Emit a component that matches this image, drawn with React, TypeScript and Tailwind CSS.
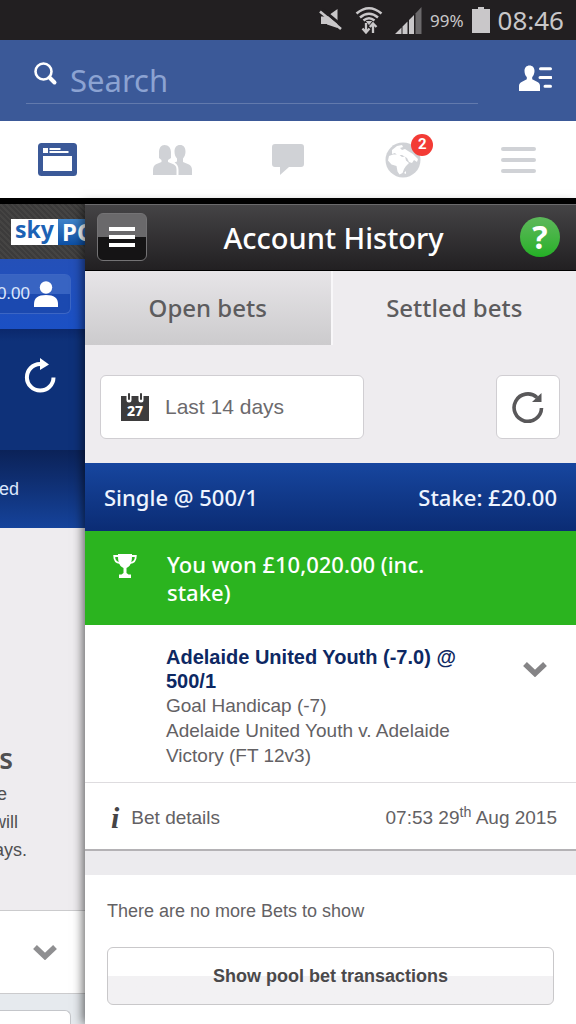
import React from "react";

const brand = "font-['Noto_Sans','Open_Sans',sans-serif]";

function MutedIcon() {
  return (
    <svg viewBox="0 0 24 24" className="h-6 w-6" aria-hidden="true">
      <path d="M2 8.500h6L18.500 1v19L8 16.500v-.5H2z" fill="#c9c7c9" />
      <path d="M3.500 1.500l21 17.500" stroke="#221f21" strokeWidth="3" />
      <path d="M1 3.500l21 17.500" stroke="#c9c7c9" strokeWidth="2.600" />
    </svg>
  );
}

function WifiIcon() {
  return (
    <svg viewBox="0 0 28 28" className="h-7 w-7" fill="none" stroke="#c9c7c9" aria-hidden="true">
      <path d="M1.500 7.500Q14-3 26.500 7.500M5 11.500Q14 4 23 11.500M8.500 14.500Q14 10 19.500 14.500" strokeWidth="2.500" />
      <path d="M11.500 15.500h5L14 18.500z" fill="#c9c7c9" />
      <path d="M11 17v9M7.500 22.500l3.500 4 3.500-4M18 27v-9M14.800 21l3.200-3.500 3.500 3.500" strokeWidth="2.300" />
    </svg>
  );
}

function SignalIcon() {
  return (
    <svg viewBox="0 0 27 27" className="h-[27px] w-[27px]" fill="#c9c7c9" aria-hidden="true">
      <path d="M0 27l6.500-6.500V27zM7.500 19.500l5-5V27h-5zM14 13l5-5v19h-5z" />
      <path d="M20.500 6.500L26.500 0v27h-6z" fill="#6b696b" />
    </svg>
  );
}

function BatteryIcon() {
  return (
    <svg viewBox="0 0 18 26" className="h-[26px] w-[18px]" fill="#c9c7c9" aria-hidden="true">
      <path d="M6 0h6v2h6v24H0V2h6z" />
    </svg>
  );
}

function StatusBar() {
  return (
    <div className="flex h-10 items-center justify-end bg-[#221f21] pr-3 font-['Noto_Sans',sans-serif] leading-none text-[#c9c7c9]">
      <MutedIcon />
      <span className="ml-3 flex"><WifiIcon /></span>
      <span className="ml-3 flex"><SignalIcon /></span>
      <span className="ml-2 text-[17px]">99%</span>
      <span className="mx-2 flex"><BatteryIcon /></span>
      <span className="text-[26px]">08:46</span>
    </div>
  );
}

function SearchBar() {
  return (
    <div className="flex h-[81px] items-start justify-between bg-[#3b5998] pl-[26px] pr-6">
      <div className="mr-10 flex h-16 flex-1 items-center border-b border-[#627aad] pl-2 pt-4">
        <svg viewBox="0 0 24 24" className="mb-3 h-6 w-6 shrink-0" fill="none" stroke="white" aria-hidden="true">
          <circle cx="9.500" cy="9.500" r="8" strokeWidth="2.600" />
          <path d="M15.500 15.500l5 5" strokeWidth="4" strokeLinecap="round" />
        </svg>
        <input
          type="search"
          aria-label="Search"
          placeholder="Search"
          className="ml-3 w-full bg-transparent font-['Noto_Sans',sans-serif] text-[31px] leading-9 text-white outline-none placeholder:text-[#8ca3d2]"
        />
      </div>
      <button type="button" aria-label="Friend requests" className="mt-6">
        <svg viewBox="0 0 34 28" className="h-7 w-[34px]" fill="white" aria-hidden="true">
          <path d="M11.500 1.500c3 0 5 2.200 5 5.500 0 2.600-1 4.700-2.300 6v2.300l5.300 2.600c1.800 1 2.500 2.100 2.500 4.200V27H1v-4.900c0-2.100.8-3.200 2.600-4.200l5.200-2.600V13C7.400 11.700 6.500 9.600 6.500 7c0-3.300 2-5.500 5-5.500z" />
          <path d="M22.500 4.700h10M22 13.500h11M27 22.300h5.500" stroke="white" strokeWidth="3" strokeLinecap="round" />
        </svg>
      </button>
    </div>
  );
}

function NavTabs() {
  return (
    <nav className="grid h-[77px] grid-cols-5 place-items-center bg-white text-[#d0d2d6]">
      <button type="button" aria-label="News feed">
        <svg viewBox="0 0 39 33" className="h-[33px] w-[39px]" aria-hidden="true">
          <rect width="39" height="33" rx="3.500" fill="#3b5998" />
          <path d="M5 5h5v5H5zM11.500 5h11v2h-11zM11.500 8h19v2h-19zM5 13h29v15H5z" fill="white" />
        </svg>
      </button>
      <button type="button" aria-label="Friends">
        <svg viewBox="0 0 39 30" className="h-[30px] w-[39px]" fill="currentColor" aria-hidden="true">
          <path d="M11.500 0C15.600 0 18 3 18 7.500v5.500l-3 2v2l5.500 2.200c2 1 3 2.800 3 5.300V30H0v-4.500c0-3 1-5.200 3-6.200L8.500 17v-2L6 13V7.500C6 3 8 0 11.500 0z" />
          <path d="M27 0c3.600 0 5.500 2.500 5.500 6.500 0 3-.9 5.300-2.500 7V17l6 2.500c2 1 3 3 3 5.500v5H25.500v-5c0-3.600-1.400-6-4-7.400l2.500-1v-3c-1.700-1.700-2.500-4-2.500-7C21.500 2.500 23.500 0 27 0z" />
        </svg>
      </button>
      <button type="button" aria-label="Messages">
        <svg viewBox="0 0 32 31" className="h-[31px] w-8" fill="currentColor" aria-hidden="true">
          <path d="M3 0h26q3 0 3 3v17q0 3-3 3H17l-9 8v-8H3q-3 0-3-3V3q0-3 3-3z" />
        </svg>
      </button>
      <button type="button" aria-label="Notifications" className="relative">
        <svg viewBox="0 0 36 36" className="h-9 w-9" aria-hidden="true">
          <circle cx="18" cy="18" r="17.500" fill="currentColor" />
          <path d="M4 14l4-1.500 6 0 3 2.500 3-.5 1 4 3 2.500-3 3-2 3-1.500 4-3 1.500-2-3-1-5.500-5-1.500-3.500-4z" fill="white" />
          <path d="M7 8l5-4 5-1 1 2-3 1 2 2 3-1 3 2 5 3 5 5-1 3-3-2-2 3-3-1-2-4-5-3-5 0-2-2-3 1z" fill="white" />
          <path d="M19 31l2-2 0 3z" fill="white" />
        </svg>
        <span className="absolute -right-3 -top-2 flex h-[22px] w-[22px] items-center justify-center rounded-full bg-[#f33b35] font-['Roboto',sans-serif] text-[15px] font-bold leading-none text-white">
          2
        </span>
      </button>
      <button type="button" aria-label="Menu" className="flex flex-col gap-[7px]">
        <span className="h-1 w-[35px] rounded-full bg-[#d0d2d6]" />
        <span className="h-1 w-[35px] rounded-full bg-[#d0d2d6]" />
        <span className="h-1 w-[35px] rounded-full bg-[#d0d2d6]" />
      </button>
    </nav>
  );
}

function Chevron({ className }: { className: string }) {
  return (
    <svg viewBox="0 0 24 16" className={className} fill="none" aria-hidden="true">
      <path d="M2 3l10 9.500L22 3" stroke="currentColor" strokeWidth="5.500" />
    </svg>
  );
}

function Sidebar() {
  return (
    <aside className="flex w-[85px] shrink-0 flex-col overflow-hidden bg-[#eeecef] font-['Liberation_Sans',Arial,sans-serif] text-[#505052]">
      <div className="flex h-[55px] items-center bg-[repeating-linear-gradient(45deg,#3c3b3b_0_2px,#454443_2px_4px)] pl-[11px]">
        <span className={`${brand} flex h-[26px] w-[47px] shrink-0 items-center justify-center bg-white pb-1 text-[23px] font-bold leading-none text-[#1c62b5]`}>
          sky
        </span>
        <span className={`${brand} flex h-[26px] w-16 shrink-0 items-center bg-linear-to-b from-[#3f83c9] to-[#0b4fa4] pl-1 text-[24px] font-bold leading-none text-white`}>
          PO
        </span>
      </div>
      <div className="flex h-[70px] items-center bg-linear-to-b from-[#2450b8] to-[#1b50c4]">
        <button type="button" className="flex h-10 w-[71px] items-center justify-end gap-1 rounded-r-md border border-l-0 border-[#3c66c4] bg-linear-to-b from-[#3864c2] from-50% to-[#1b49b0] to-50% pr-3 text-[17px] text-[#dbe6fb]">
          <span>0.00</span>
          <svg viewBox="0 0 24 26" className="h-[26px] w-6 shrink-0" fill="white" aria-hidden="true">
            <circle cx="12" cy="6.500" r="6.200" />
            <path d="M0 26v-3c0-6 4-9 12-9s12 3 12 9v3z" />
          </svg>
        </button>
      </div>
      <div className="flex h-[121px] justify-end bg-linear-to-b from-[#0b286c] via-[#0e3179] via-10% to-[#0e3179] pr-7 pt-7">
        <button type="button" aria-label="Refresh" className="h-9">
          <svg viewBox="0 0 34 36" className="h-9 w-[34px]" fill="none" aria-hidden="true">
            <path d="M30.500 20.500A13.300 13.300 0 1 1 17 7" stroke="white" strokeWidth="4" />
            <path d="M17 1l9 6.500-9 5.500z" fill="white" />
          </svg>
        </button>
      </div>
      <div className="flex h-[78px] items-center justify-end bg-linear-to-b from-[#0b2258] to-[#15439b] pr-[66px] text-lg text-[#dbe6fb]">
        ed
      </div>
      <div className="flex h-[382px] flex-col items-start pt-52">
        <span className={`${brand} flex w-[13px] justify-end text-[28px] font-semibold leading-[44px]`}>s</span>
        <span className="flex w-[7px] justify-end text-lg leading-7">e</span>
        <span className="flex w-[18px] justify-end text-lg leading-7">will</span>
        <span className="flex w-[27px] justify-end text-lg leading-7">ays.</span>
      </div>
      <div className="flex h-[84px] items-center justify-end border-y border-[#cbcbcd] bg-white pr-7 text-[#8f8f91]">
        <Chevron className="h-4 w-6" />
      </div>
      <div className="flex-1 bg-[#e6eaee] pt-4">
        <div className="h-full w-[71px] rounded-tr-md border-r border-t border-[#c4c6ca] bg-white" />
      </div>
    </aside>
  );
}

function PanelHeader() {
  return (
    <header className="flex h-[67px] items-center justify-between border-b border-black bg-linear-to-b from-[#454446] to-[#222022] pl-3 pr-4 shadow-[inset_0_1px_0_#6b6a6c]">
      <button type="button" aria-label="Open menu" className="flex h-12 w-[50px] flex-col items-center justify-center gap-1 rounded-md border border-[#747375] bg-linear-to-b from-[#6a696b] from-50% to-[#151415] to-50%">
        <span className="h-1 w-[26px] bg-white" />
        <span className="h-1 w-[26px] bg-white" />
        <span className="h-1 w-[26px] bg-white" />
      </button>
      <h1 className={`${brand} text-[29px] font-medium leading-none text-white`}>Account History</h1>
      <button type="button" aria-label="Help" className={`${brand} flex h-10 w-10 items-center justify-center rounded-full bg-linear-to-b from-[#5cb85a] to-[#22b024] text-[32px] font-bold leading-none text-white`}>
        ?
      </button>
    </header>
  );
}

function FilterBar() {
  return (
    <div className="flex items-center justify-between bg-[#eeecef] pb-6 pl-[15px] pr-4 pt-[30px]">
      <label className="flex h-16 w-[264px] items-center rounded-md border border-[#d0ced2] bg-white pl-5">
        <svg viewBox="0 0 28 28" className="h-7 w-7" aria-hidden="true">
          <path d="M0 3h28v25H0z" fill="#3d3c3d" />
          <path d="M8 3v4M20 3v4" stroke="white" strokeWidth="5" strokeLinecap="round" />
          <path d="M8 1v5M20 1v5" stroke="#3d3c3d" strokeWidth="2" strokeLinecap="round" />
          <text x="14" y="23" textAnchor="middle" fontFamily="Noto Sans, sans-serif" fontSize="14" fontWeight="800" fill="white">27</text>
        </svg>
        <select aria-label="Period" className="ml-4 flex-1 appearance-none bg-transparent font-['Liberation_Sans',Arial,sans-serif] text-[21px] text-[#6c6a6d] outline-none">
          <option>Last 14 days</option>
        </select>
      </label>
      <button type="button" aria-label="Refresh bets" className="flex h-16 w-16 items-center justify-center rounded-md border border-[#d0ced2] bg-white">
        <svg viewBox="0 0 32 32" className="h-8 w-8" fill="none" aria-hidden="true">
          <path d="M29.500 17A13.700 13.700 0 1 1 25 6.500" stroke="#59585a" strokeWidth="3.600" />
          <path d="M29.500 2v9H20z" fill="#59585a" />
        </svg>
      </button>
    </div>
  );
}

function BetCard() {
  return (
    <section>
      <div className={`${brand} flex h-[68px] items-center justify-between bg-linear-to-b from-[#17469f] to-[#0b2c74] px-[19px] text-[22px] font-medium text-[#eef4ff]`}>
        <span>Single @ 500/1</span>
        <span>Stake: £20.00</span>
      </div>
      <div className="flex bg-[#2bb41f] pb-[19px] pl-7 pr-4 pt-[19px] text-white">
        <svg viewBox="0 0 24 24" className="mt-1 h-6 w-6 shrink-0" aria-hidden="true">
          <path d="M5 0h14v2c0 7-2 10.500-5.500 12v5l2 1.500H18V24H6v-3.500h2.500l2-1.500v-5C7 12.500 5 9 5 2z" fill="white" />
          <path d="M5.500 2H1.200c0 5 2 6.800 6 7.200M18.500 2h4.300c0 5-2 6.800-6 7.200" fill="none" stroke="white" strokeWidth="1.800" />
        </svg>
        <p className={`${brand} ml-[30px] w-72 text-[22px] font-medium leading-7`}>
          You won £10,020.00 (inc. stake)
        </p>
      </div>
      <div className="flex items-start justify-between bg-white pb-[14px] pl-[81px] pr-[29px] pt-5">
        <div className="w-[300px] text-[19px] text-[#636164]">
          <h2 className="text-[20px] font-bold leading-6 text-[#0d2863]">Adelaide United Youth (-7.0) @ 500/1</h2>
          <p className="leading-[25px]">Goal Handicap (-7)</p>
          <p className="leading-[25px]">Adelaide United Youth v. Adelaide Victory (FT 12v3)</p>
        </div>
        <button type="button" aria-label="Expand bet" className="mt-4 text-[#858486]">
          <Chevron className="h-4 w-6" />
        </button>
      </div>
      <div className="flex h-[69px] items-center justify-between border-b-2 border-t border-b-[#b4b2b5] border-t-[#dedcdf] bg-white pl-[26px] pr-[19px] pt-1 text-[19px] text-[#636164]">
        <button type="button" className="flex items-center gap-3">
          <span className="font-['Liberation_Serif',serif] text-[30px] font-bold italic leading-none text-[#454446]" aria-hidden="true">i</span>
          Bet details
        </button>
        <time dateTime="2015-08-29T07:53">07:53 29<sup>th</sup> Aug 2015</time>
      </div>
    </section>
  );
}

export default function App() {
  return (
    <div className="flex min-h-screen flex-col overflow-hidden bg-white">
      <StatusBar />
      <SearchBar />
      <NavTabs />
      <div className="flex flex-1 border-t-[6px] border-black">
        <Sidebar />
        <main className="relative z-10 flex min-w-0 flex-1 flex-col bg-white font-['Liberation_Sans',Arial,sans-serif] shadow-[-2px_0_10px_rgba(0,0,0,0.6)]">
          <PanelHeader />
          <div className={`${brand} grid h-[74px] grid-cols-2 bg-[#eeecef] text-[24px] font-medium text-[#5d5c5e]`}>
            <button type="button" className="bg-linear-to-b from-[#e7e5e8] to-[#cccbcd]">Open bets</button>
            <button type="button" className="border-l-2 border-white/60">Settled bets</button>
          </div>
          <FilterBar />
          <BetCard />
          <div className="h-6 bg-[#ecebee]" />
          <div className="flex flex-col gap-6 bg-white px-[22px] pb-4 pt-6 text-[18px] text-[#636164]">
            <p className="leading-6">There are no more Bets to show</p>
            <button type="button" className="h-[58px] rounded-md border border-[#c9c8ca] bg-linear-to-b from-white from-50% to-[#f2f1f3] to-50% font-bold text-[#4a494b]">
              Show pool bet transactions
            </button>
          </div>
        </main>
      </div>
    </div>
  );
}
